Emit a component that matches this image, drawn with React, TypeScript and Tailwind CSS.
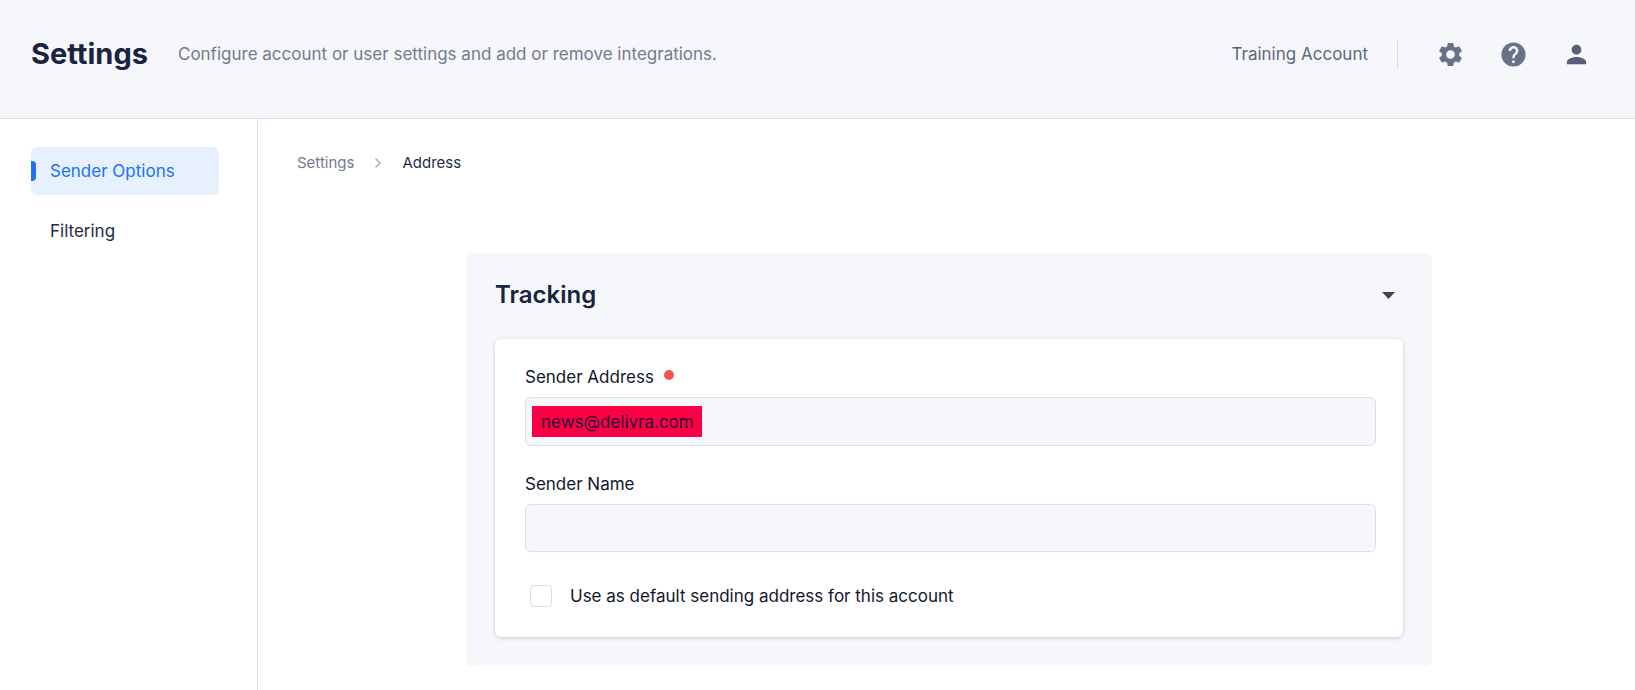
import { MdHelp, MdPerson, MdSettings } from "react-icons/md";
import { ChevronRight } from "lucide-react";

const navItems = [
  { label: "Sender Options", active: true },
  { label: "Filtering", active: false },
];

function Header() {
  return (
    <header className="flex items-center justify-between border-b border-[#dce0eb] bg-[#f5f7fb] pt-[39px] pr-11 pb-[49px] pl-[31px]">
      <div className="flex items-center gap-[30px]">
        <h1 className="text-[29px] leading-[30px] font-bold text-[#1a2340]">Settings</h1>
        <p className="text-[17px] leading-7 text-[#737b8c]">
          Configure account or user settings and add or remove integrations.
        </p>
      </div>
      <div className="flex items-center">
        <span className="text-[17px] leading-7 text-[#5f677b]">Training Account</span>
        <div className="mr-[38px] ml-[29px] h-[29px] w-px bg-[#dadeea]"></div>
        <div className="flex items-center gap-[34px] text-[#6a728a]">
          <button type="button" aria-label="Account settings">
            <MdSettings size={29} />
          </button>
          <button type="button" aria-label="Help">
            <MdHelp size={29} />
          </button>
          <button type="button" aria-label="Profile" className="text-[#585f76]">
            <MdPerson size={29} />
          </button>
        </div>
      </div>
    </header>
  );
}

function Sidebar() {
  return (
    <nav className="flex w-[258px] shrink-0 flex-col gap-3 border-r border-[#dce0eb] pt-7 pr-[38px] pl-[31px]">
      {navItems.map((item) => (
        <a
          key={item.label}
          href="#"
          className={
            item.active
              ? "relative flex h-12 items-center rounded-md bg-[#e6f0ff] pt-0.5 pl-[19px] text-[17px] text-[#2070f4]"
              : "flex h-12 items-center rounded-md pt-0.5 pl-[19px] text-[17px] text-[#1f2b49]"
          }
        >
          {item.active && (
            <span className="absolute top-3.5 left-0 h-5 w-[5px] rounded-r bg-[#2070f4]"></span>
          )}
          {item.label}
        </a>
      ))}
    </nav>
  );
}

function TrackingCard() {
  return (
    <section className="mx-auto mt-20 w-full max-w-[966px] rounded-md bg-[#f5f7fb] px-[29px] pt-[26px] pb-[29px]">
      <div className="mb-7 flex items-center justify-between pr-2">
        <h2 className="text-2xl font-semibold text-[#1a2340]">Tracking</h2>
        <button type="button" aria-label="Collapse Tracking">
          <svg width="13" height="7" viewBox="0 0 13 7" fill="#444">
            <path d="M0 0h13L6.500 7z" />
          </svg>
        </button>
      </div>

      <form className="rounded-md bg-white pt-6 pr-[27px] pb-[27px] pl-[30px] text-[17px] text-[#12182b] shadow-[0_1px_4px_rgba(30,35,60,0.2)]">
        <div className="flex items-center gap-2.5">
          <label htmlFor="sender-address" className="leading-7">
            Sender Address
          </label>
          <span className="mb-1 size-2.5 rounded-full bg-[#f2564f]"></span>
        </div>
        <div className="mt-1.5 flex h-[49px] items-center rounded-md border border-[#dadeea] bg-[#f5f7fb] pl-1.5">
          <input
            id="sender-address"
            type="text"
            defaultValue="news@delivra.com"
            required
            className="h-[31px] w-[170px] bg-[#fb0045] px-[9px] text-[#2b0a3a] outline-none"
          />
        </div>

        <label htmlFor="sender-name" className="mt-6 block leading-7">
          Sender Name
        </label>
        <input
          id="sender-name"
          type="text"
          className="mt-1.5 block h-12 w-full rounded-md border border-[#dadeea] bg-[#f5f7fb] px-3.5 outline-none"
        />

        <div className="mt-[30px] flex items-center gap-[18px] pl-[5px]">
          <input
            id="default-address"
            type="checkbox"
            className="size-[22px] appearance-none rounded border border-[#dadeea] bg-white checked:bg-[#2070f4]"
          />
          <label htmlFor="default-address" className="leading-7">
            Use as default sending address for this account
          </label>
        </div>
      </form>
    </section>
  );
}

export default function App() {
  return (
    <div className="flex min-h-screen flex-col bg-white font-['Inter',sans-serif]">
      <Header />
      <div className="flex flex-1">
        <Sidebar />
        <main className="min-w-0 flex-1 pt-[34px] pr-[34px] pb-6 pl-[39px]">
          <div className="flex items-center text-[15px] leading-5">
            <a href="#" className="text-[#737b8c]">
              Settings
            </a>
            <ChevronRight size={16} className="mx-4 text-[#a0a6b8]" />
            <span className="text-[#1f2b49]">Address</span>
          </div>
          <TrackingCard />
        </main>
      </div>
    </div>
  );
}
